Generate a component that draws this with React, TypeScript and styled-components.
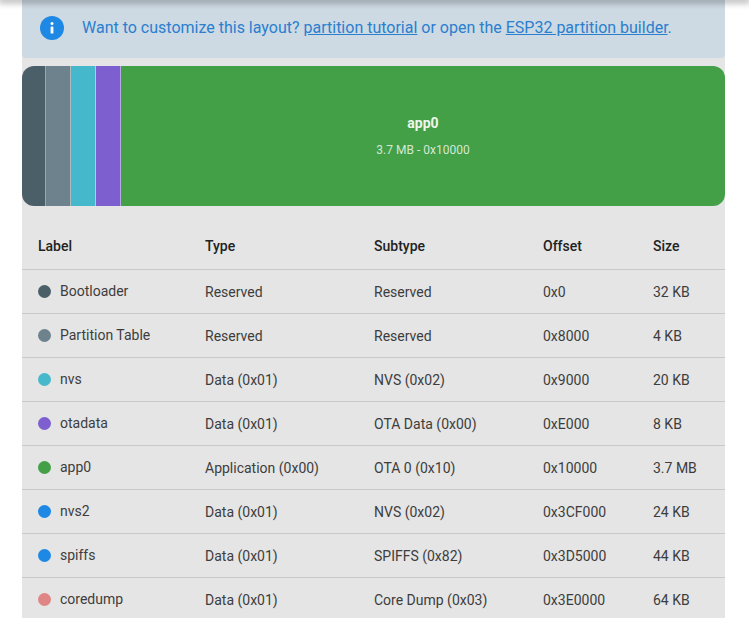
import React from "react";
import styled, { createGlobalStyle } from "styled-components";

const GlobalStyle = createGlobalStyle`
    body {
        margin: 0;
        background: #ffffff;
        font-family: Roboto, "Noto Sans", sans-serif;
    }
`;

const TopShadow = styled.div`
    position: relative;
    z-index: 2;
    height: 0;
    box-shadow: 0 0 7px 2px rgba(0, 0, 0, 0.45);
`;

const Section = styled.div`
    margin: 0 24px 0 22px;
    background-color: #e5e5e5;
    display: flex;
    flex-direction: column;
`;

const Alert = styled.div`
    background-color: #cdd9e3;
    border-radius: 0 0 4px 4px;
    height: 58px;
    padding: 0 18px;
    display: flex;
    align-items: center;
    gap: 18px;
    box-sizing: border-box;
    color: #2a7fcf;
    font-size: 16px;
    margin-bottom: 8px;
`;

const InfoIcon = styled.div`
    width: 24px;
    height: 24px;
    border-radius: 50%;
    background-color: #1e88e5;
    color: #ffffff;
    display: flex;
    align-items: center;
    justify-content: center;
    flex-shrink: 0;
    margin-top: -3px;
`;

const AlertText = styled.span`
    margin-top: -3px;
`;

const AlertLink = styled.a`
    color: #2a7fcf;
    text-decoration: underline;
`;

const Bar = styled.div`
    height: 140px;
    border-radius: 12px;
    overflow: hidden;
    display: flex;
`;

const Segment = styled.div<{ $color: string; $width?: number }>`
    box-sizing: border-box;
    background-color: ${(p) => p.$color};
    width: ${(p) => (p.$width ? `${p.$width}px` : "auto")};
    flex: ${(p) => (p.$width ? "0 0 auto" : "1")};
    border-right: 1px solid rgba(255, 255, 255, 0.45);
    display: flex;
    flex-direction: column;
    align-items: center;
    justify-content: center;
    gap: 12px;
    &:last-child {
        border-right: 0;
    }
`;

const SegmentName = styled.div`
    color: #eef6ee;
    font-weight: 700;
    font-size: 14px;
    margin-top: -1px;
`;

const SegmentInfo = styled.div`
    color: rgba(255, 255, 255, 0.78);
    font-size: 12px;
`;

const Table = styled.div`
    margin-top: 18px;
    display: grid;
    grid-template-columns: 167px 169px 169px 110px 1fr;
    font-size: 14px;
    color: #3d3d3d;
`;

const HeadCell = styled.div`
    box-sizing: border-box;
    height: 46px;
    padding: 0 0 2px 16px;
    display: flex;
    align-items: center;
    font-weight: 500;
    color: #222222;
    border-bottom: 1px solid #c9c9c9;
`;

const Cell = styled.div`
    box-sizing: border-box;
    height: 44px;
    padding-left: 16px;
    display: flex;
    align-items: center;
    gap: 9px;
    border-bottom: 1px solid #c9c9c9;
`;

const LabelText = styled.span`
    margin-top: -2px;
`;

const Dot = styled.span<{ $color: string }>`
    width: 13px;
    height: 13px;
    border-radius: 50%;
    background-color: ${(p) => p.$color};
    flex-shrink: 0;
`;

const segments = [
    { color: "#4b5f69", width: 24 },
    { color: "#6d828d", width: 25 },
    { color: "#45b9cb", width: 25 },
    { color: "#7d5fcf", width: 25 },
];

const partitions = [
    { label: "Bootloader", color: "#4b5f69", type: "Reserved", subtype: "Reserved", offset: "0x0", size: "32 KB" },
    { label: "Partition Table", color: "#6d828d", type: "Reserved", subtype: "Reserved", offset: "0x8000", size: "4 KB" },
    { label: "nvs", color: "#45b9cb", type: "Data (0x01)", subtype: "NVS (0x02)", offset: "0x9000", size: "20 KB" },
    { label: "otadata", color: "#7d5fcf", type: "Data (0x01)", subtype: "OTA Data (0x00)", offset: "0xE000", size: "8 KB" },
    { label: "app0", color: "#43a047", type: "Application (0x00)", subtype: "OTA 0 (0x10)", offset: "0x10000", size: "3.7 MB" },
    { label: "nvs2", color: "#1e88e5", type: "Data (0x01)", subtype: "NVS (0x02)", offset: "0x3CF000", size: "24 KB" },
    { label: "spiffs", color: "#1e88e5", type: "Data (0x01)", subtype: "SPIFFS (0x82)", offset: "0x3D5000", size: "44 KB" },
    { label: "coredump", color: "#e08585", type: "Data (0x01)", subtype: "Core Dump (0x03)", offset: "0x3E0000", size: "64 KB" },
];

export default function App() {
    return (
        <>
            <GlobalStyle />
            <TopShadow />
            <Section>
                <Alert>
                    <InfoIcon>
                        <svg width="12" height="14" viewBox="0 0 12 14">
                            <circle cx="6" cy="2.6" r="1.5" fill="#fff" />
                            <rect x="4.6" y="5.4" width="2.8" height="7.2" rx="0.6" fill="#fff" />
                        </svg>
                    </InfoIcon>
                    <AlertText>
                        Want to customize this layout? <AlertLink href="#">partition tutorial</AlertLink> or open the{" "}
                        <AlertLink href="#">ESP32 partition builder</AlertLink>.
                    </AlertText>
                </Alert>
                <Bar>
                    {segments.map((s, i) => (
                        <Segment key={i} $color={s.color} $width={s.width} />
                    ))}
                    <Segment $color="#43a047">
                        <SegmentName>app0</SegmentName>
                        <SegmentInfo>3.7 MB - 0x10000</SegmentInfo>
                    </Segment>
                </Bar>
                <Table>
                    <HeadCell>Label</HeadCell>
                    <HeadCell>Type</HeadCell>
                    <HeadCell>Subtype</HeadCell>
                    <HeadCell>Offset</HeadCell>
                    <HeadCell>Size</HeadCell>
                    {partitions.map((p) => (
                        <React.Fragment key={p.label}>
                            <Cell>
                                <Dot $color={p.color} />
                                <LabelText>{p.label}</LabelText>
                            </Cell>
                            <Cell>{p.type}</Cell>
                            <Cell>{p.subtype}</Cell>
                            <Cell>{p.offset}</Cell>
                            <Cell>{p.size}</Cell>
                        </React.Fragment>
                    ))}
                </Table>
            </Section>
        </>
    );
}
